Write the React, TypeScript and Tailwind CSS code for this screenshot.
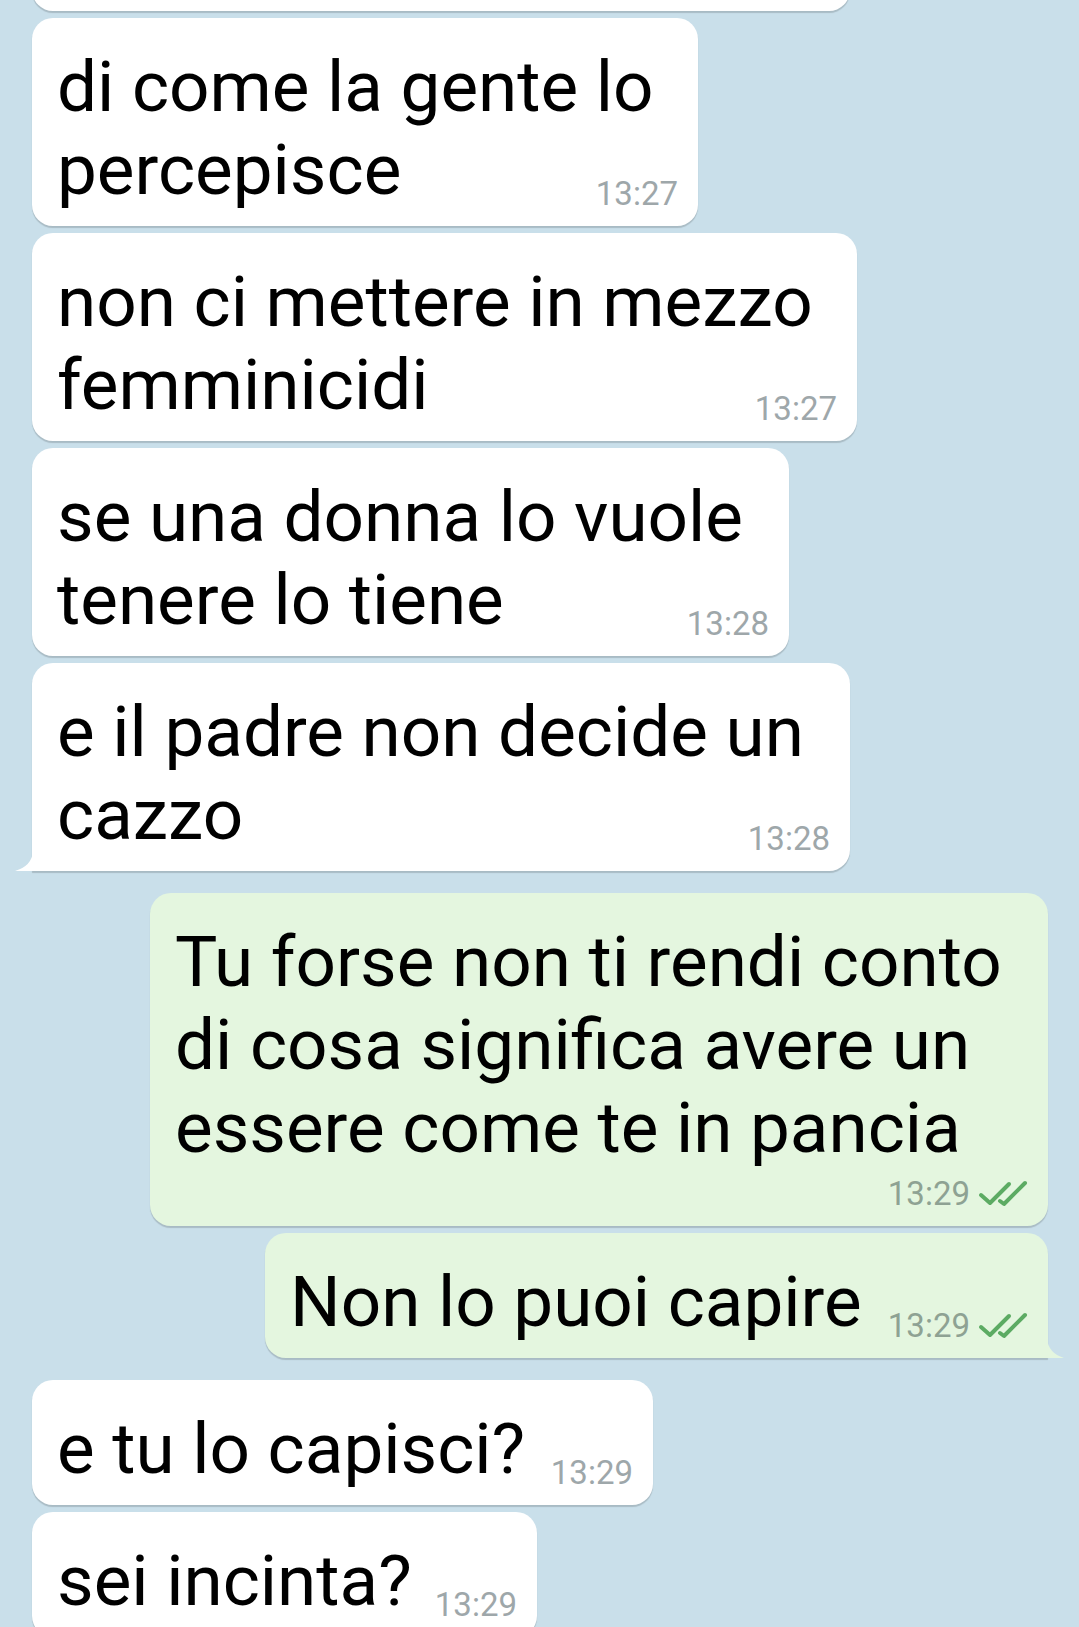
import React from "react";

type Msg = {
  lines: string[];
  time: string;
  out?: boolean;
  width: number;
  tail?: boolean;
  timeRow?: boolean;
};

// bubble widths are fixed, lines are as they wrap on the phone
const widths: Record<number, string> = {
  666: "w-[666px]",
  825: "w-[825px]",
  757: "w-[757px]",
  818: "w-[818px]",
  898: "w-[898px]",
  783: "w-[783px]",
  621: "w-[621px]",
  505: "w-[505px]",
};

const messages: Msg[] = [
  { lines: ["di come la gente lo", "percepisce"], time: "13:27", width: 666 },
  { lines: ["non ci mettere in mezzo", "femminicidi"], time: "13:27", width: 825 },
  { lines: ["se una donna lo vuole", "tenere lo tiene"], time: "13:28", width: 757 },
  { lines: ["e il padre non decide un", "cazzo"], time: "13:28", width: 818, tail: true },
  {
    lines: ["Tu forse non ti rendi conto", "di cosa significa avere un", "essere come te in pancia"],
    time: "13:29",
    width: 898,
    out: true,
    timeRow: true,
  },
  { lines: ["Non lo puoi capire"], time: "13:29", width: 783, out: true, tail: true },
  { lines: ["e tu lo capisci?"], time: "13:29", width: 621 },
  { lines: ["sei incinta?"], time: "13:29", width: 505 },
];

function Ticks() {
  return (
    <svg width="50" height="28" viewBox="0 0 50 28" className="ml-[8px]">
      <path d="M3 15 L12 23 L31 4" fill="none" stroke="#5cab63" strokeWidth="4" strokeLinecap="round" strokeLinejoin="round" />
      <path d="M22 21 L26 24 L47 3" fill="none" stroke="#5cab63" strokeWidth="4" strokeLinecap="round" strokeLinejoin="round" />
    </svg>
  );
}

function Bubble({ m }: { m: Msg }) {
  const bg = m.out ? "bg-[#e4f6df]" : "bg-white";
  const corner = m.tail ? (m.out ? "rounded-br-none" : "rounded-bl-none") : "";
  return (
    <div className={`flex ${m.out ? "justify-end pr-[31px]" : "justify-start pl-[32px]"}`}>
      <div
        className={`relative ${widths[m.width]} ${bg} ${corner} rounded-[21px] shadow-[0_2px_1px_rgba(0,0,0,0.16)] pl-[25px] pt-[27px] ${
          m.timeRow ? "pb-[57px]" : "pb-[15px]"
        }`}
      >
        <p className="text-[71px] leading-[83px] text-black whitespace-nowrap font-['Roboto',sans-serif]">
          {m.lines.map((l, i) => (
            <span key={i} className="block">
              {l}
            </span>
          ))}
        </p>
        <div className="absolute right-[20px] bottom-[12px] flex items-center">
          <span
            className={`text-[33px] leading-[40px] font-['Roboto',sans-serif] ${
              m.out ? "text-[#8ea293]" : "text-[#9ea7aa]"
            }`}
          >
            {m.time}
          </span>
          {m.out && <Ticks />}
        </div>
        {m.tail && !m.out && (
          <svg width="19" height="32" viewBox="0 0 19 32" className="absolute -left-[17px] bottom-0">
            <path d="M18 0 L18 12 Q17 27 0 32 L19 32 L19 0 Z" fill="#ffffff" />
          </svg>
        )}
        {m.tail && m.out && (
          <svg width="18" height="32" viewBox="0 0 18 32" className="absolute -right-[16px] bottom-0">
            <path d="M1 0 L1 12 Q2 27 18 32 L0 32 L0 0 Z" fill="#e4f6df" />
          </svg>
        )}
      </div>
    </div>
  );
}

export default function App() {
  const incoming = messages.slice(0, 4);
  const outgoing = messages.slice(4, 6);
  const last = messages.slice(6);
  return (
    <div className="w-[1079px] h-[1627px] overflow-hidden bg-[#c9dfea] font-['Roboto',sans-serif]">
      {/* earlier message, scrolled off the top */}
      <div className="pl-[32px] -mt-[50px]">
        <div className="w-[818px] h-[61px] bg-white rounded-[21px] shadow-[0_2px_1px_rgba(0,0,0,0.16)]" />
      </div>
      <div className="flex flex-col gap-[7px] mt-[7px]">
        {incoming.map((m, i) => (
          <Bubble key={i} m={m} />
        ))}
      </div>
      <div className="flex flex-col gap-[7px] mt-[22px]">
        {outgoing.map((m, i) => (
          <Bubble key={i} m={m} />
        ))}
      </div>
      <div className="flex flex-col gap-[7px] mt-[22px]">
        {last.map((m, i) => (
          <Bubble key={i} m={m} />
        ))}
      </div>
    </div>
  );
}
